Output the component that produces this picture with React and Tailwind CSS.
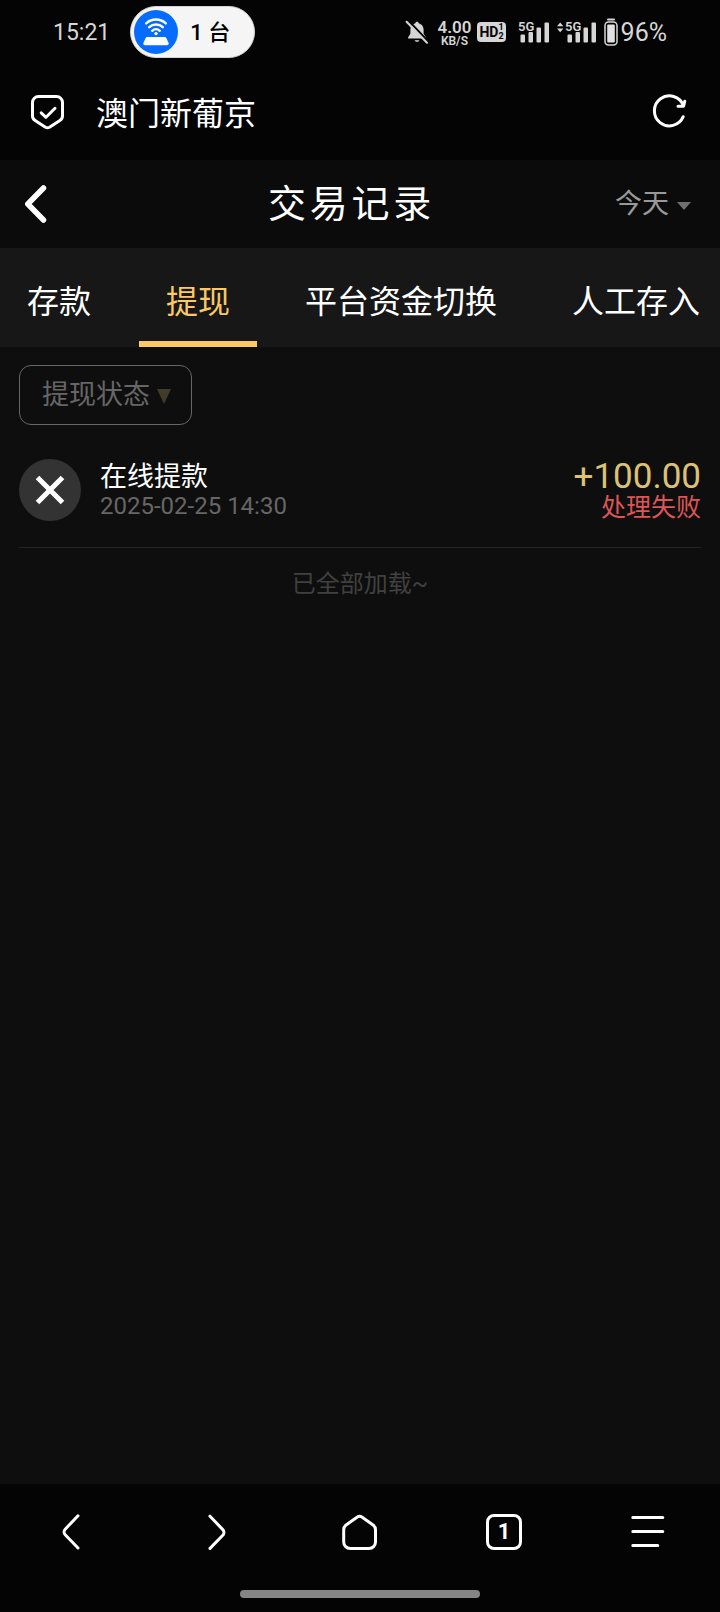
import { useState } from 'react';

const TABS = ['存款', '提现', '平台资金切换', '人工存入'];

const RECORDS = [
  { id: 1, title: '在线提款', time: '2025-02-25 14:30', amount: '+100.00', status: '处理失败' },
];

// ─── Status bar ───────────────────────────────────────────────────────────────
function Signal({ arrows }) {
  return (
    <svg className="h-6 w-10 flex-shrink-0" viewBox="0 0 40 24" fill="#d6d6d6">
      {arrows && <path d="M0 6.2 3.2 2.4 6.4 6.2ZM0 8.4h6.4L3.2 12.2Z" />}
      <text x="8" y="11" fontSize="13" fontWeight="600" fontFamily="Roboto, sans-serif">5G</text>
      <rect x="10.5" y="14.5" width="4.5" height="8" rx="1" />
      <rect x="18.5" y="12" width="4.5" height="10.5" rx="1" />
      <rect x="26.5" y="7.5" width="4.5" height="15" rx="1" />
      <rect x="34.5" y="2.5" width="4.5" height="20" rx="1" />
    </svg>
  );
}

function StatusBar() {
  return (
    <div className="flex h-16 items-center justify-between px-[53px] text-[#d6d6d6]">
      <div className="flex items-center gap-5">
        <span className="pt-0.5 text-[23px] leading-8">15:21</span>
        <div className="flex h-[52px] items-center gap-3 rounded-full border border-[#d4d4d4] bg-[#f5f5f5] pl-[3px] pr-6">
          <svg className="h-11 w-11" viewBox="0 0 44 44" fill="none">
            <circle cx="22" cy="22" r="22" fill="#056cfe" />
            <g stroke="#fff" strokeWidth="2.4" strokeLinecap="round">
              <path d="M12.2 13.4a14.4 14.4 0 0 1 19.600 0" />
              <path d="M15.2 17.200a10 10 0 0 1 13.600 0" />
              <path d="M18.2 20.800a5.600 5.600 0 0 1 7.600 0" />
            </g>
            <circle cx="22" cy="23.6" r="1.7" fill="#fff" />
            <path d="M13.6 27h16.8c1 0 1.6.4 2 1.200l2 4.200c.8 1.800 0 2.800-1.600 2.800H11.200c-1.600 0-2.400-1-1.600-2.800l2-4.200c.4-.8 1-1.200 2-1.200Z" fill="#fff" />
          </svg>
          <span className="pt-0.5 text-[22px] font-medium leading-8 text-black">1 台</span>
        </div>
      </div>

      <div className="flex items-center">
        <svg className="mr-2 h-6 w-6" viewBox="0 0 24 24" fill="none">
          <path d="M12 1.800c.9 0 1.500.6 1.700 1.400 3 .8 4.900 3.200 4.900 6.400v4.200l2.200 3.400c.4.700 0 1.400-.8 1.400H4c-.8 0-1.200-.7-.8-1.400l2.200-3.400V9.600c0-3.200 1.900-5.600 4.900-6.400.2-.8.8-1.400 1.700-1.400Z" fill="#d6d6d6" />
          <path d="M9.600 20.200h4.800c-.4 1-1.300 1.600-2.400 1.600s-2-.6-2.400-1.600Z" fill="#d6d6d6" />
          <path d="m3.600.8 20 21" stroke="#040404" strokeWidth="2" />
          <path d="m1.600 1.800 20.400 21" stroke="#d6d6d6" strokeWidth="2" strokeLinecap="round" />
        </svg>
        <div className="mr-1.5 pt-0.5 text-center font-semibold">
          <p className="text-[17px] leading-4">4.00</p>
          <p className="text-[12px] leading-3">KB/S</p>
        </div>
        <div className="mr-1 flex h-5 items-center rounded bg-[#d6d6d6] px-0.5 text-[#050505]">
          <span className="text-[14px] font-bold leading-5">HD</span>
          <span className="text-[9px] font-bold leading-[9px]">1<br />2</span>
        </div>
        <Signal />
        <div className="w-[7px]" />
        <Signal arrows />
        <svg className="ml-1.5 h-7 w-4" viewBox="0 0 16 28" fill="none">
          <path d="M5 1.500h6" stroke="#d6d6d6" strokeWidth="2" strokeLinecap="round" />
          <rect x="2" y="4" width="12" height="23" rx="3.500" stroke="#d6d6d6" strokeWidth="1.500" />
          <rect x="4.200" y="6.500" width="7.600" height="18" rx="1" fill="#e2e2e2" />
        </svg>
        <span className="ml-0.5 pt-0.5 text-[25px] leading-8">96%</span>
      </div>
    </div>
  );
}

// ─── Browser chrome ───────────────────────────────────────────────────────────
function AddressBar() {
  return (
    <div className="flex h-24 items-center gap-7 px-7 text-white">
      <svg className="h-10 w-10" viewBox="0 0 40 40" fill="none" stroke="currentColor" strokeWidth="3" strokeLinecap="round" strokeLinejoin="round">
        <path d="M10.500 4.500h18a6 6 0 0 1 6 6v13.500a5 5 0 0 1-2.600 4.400l-10.400 6.800a4 4 0 0 1-4 0L7.100 28.400A5 5 0 0 1 4.500 24V10.500a6 6 0 0 1 6-6Z" />
        <path d="m13.200 20.800 4.800 4.500 9-9" />
      </svg>
      <p className="flex-1 pt-1 text-[32px] leading-10">澳门新葡京</p>
      <button type="button" aria-label="刷新">
        <svg className="h-10 w-10" viewBox="0 0 40 40" fill="none" stroke="currentColor" strokeWidth="3" strokeLinecap="round" strokeLinejoin="round">
          <path d="M31.200 24.700A15 15 0 1 1 31.400 13.500" />
          <path d="M32.800 9.200 31.600 14.200 26 14.200" />
        </svg>
      </button>
    </div>
  );
}

function BottomNav() {
  const icon = 'h-9 w-9';
  const stroke = { fill: 'none', stroke: 'currentColor', strokeWidth: 3, strokeLinecap: 'round', strokeLinejoin: 'round' };
  return (
    <footer className="bg-[#040404] text-white">
      <nav className="flex h-24">
        <button type="button" aria-label="后退" className="flex flex-1 items-center justify-center">
          <svg className={icon} viewBox="0 0 36 36" {...stroke}>
            <path d="M24 1.800 11.200 15.200a4 4 0 0 0 0 5.600L24 34" />
          </svg>
        </button>
        <button type="button" aria-label="前进" className="flex flex-1 items-center justify-center">
          <svg className={icon} viewBox="0 0 36 36" {...stroke}>
            <path d="M12 2.200 24.800 15.600a4 4 0 0 1 0 5.600L12 34.400" />
          </svg>
        </button>
        <button type="button" aria-label="主页" className="flex flex-1 items-center justify-center">
          <svg className={icon} viewBox="0 0 36 36" {...stroke}>
            <path d="M15 3.200 4.100 11a6 6 0 0 0-2.400 4.800V28a6.500 6.500 0 0 0 6.500 6.500h18.800a6.500 6.500 0 0 0 6.500-6.500V15.800a6 6 0 0 0-2.400-4.800L20.200 3.200a4.600 4.600 0 0 0-5.200 0Z" />
          </svg>
        </button>
        <button type="button" aria-label="标签页" className="flex flex-1 items-center justify-center">
          <span className="flex h-9 w-9 items-center justify-center rounded-lg border-3 border-white text-[22px] font-bold leading-6">1</span>
        </button>
        <button type="button" aria-label="菜单" className="flex flex-1 items-center justify-center">
          <svg className={icon} viewBox="0 0 36 36" {...stroke}>
            <path d="M2.800 3.500h30M2.800 17.500h30M2.800 31.500h25" />
          </svg>
        </button>
      </nav>
      <div className="flex h-8 justify-center pt-2.5">
        <div className="h-2 w-1/3 rounded-full bg-[#858585]" />
      </div>
    </footer>
  );
}

// ─── Page ─────────────────────────────────────────────────────────────────────
function PageHeader() {
  return (
    <header className="flex h-22 items-center bg-[#0b0b0b]">
      <button type="button" aria-label="返回" className="w-22 pl-4 text-white">
        <svg className="h-10 w-10" viewBox="0 0 40 40" fill="none" stroke="currentColor" strokeWidth="5.500" strokeLinecap="round" strokeLinejoin="round">
          <path d="M27.500 4 11.800 20l15.700 16" />
        </svg>
      </button>
      <h1 className="flex-1 text-center text-[38px] leading-12 tracking-widest text-white">交易记录</h1>
      <div className="relative w-[105px]">
        <select aria-label="日期" className="w-full appearance-none bg-transparent pr-12 text-[27px] leading-9 text-[#999999]">
          <option>今天</option>
        </select>
        <svg className="pointer-events-none absolute right-7 top-4 h-2 w-4" viewBox="0 0 16 8" fill="#6f6f6f">
          <path d="M1 0h14L8 8Z" />
        </svg>
      </div>
    </header>
  );
}

function TabBar({ active, onChange }) {
  return (
    <div role="tablist" className="flex gap-[21px] overflow-hidden bg-[#171717]">
      {TABS.map((tab) => (
        <button
          key={tab}
          type="button"
          role="tab"
          aria-selected={tab === active}
          onClick={() => onChange(tab)}
          className={`flex-shrink-0 whitespace-nowrap border-b-6 px-[27px] pb-[19px] pt-[34px] text-[32px] leading-10 ${
            tab === active ? 'border-[#fbc965] text-[#fbc965]' : 'border-transparent text-white'
          }`}
        >
          {tab}
        </button>
      ))}
    </div>
  );
}

function RecordRow({ record }) {
  return (
    <li className="flex items-center gap-[19px] border-b border-[#242424] pb-[26px]">
      <div className="flex h-[62px] w-[62px] items-center justify-center rounded-full bg-[#333333]">
        <svg className="h-8 w-8" viewBox="0 0 32 32" fill="none" stroke="#fff" strokeWidth="5">
          <path d="m3.500 3.500 25 25M28.500 3.500l-25 25" />
        </svg>
      </div>
      <div className="flex-1">
        <p className="text-[27px] leading-8 text-white">{record.title}</p>
        <p className="text-[24px] leading-[27px] text-[#666666]">{record.time}</p>
      </div>
      <div className="text-right">
        <p className="text-[35px] leading-[34px] text-[#dcc274]">{record.amount}</p>
        <p className="text-[25px] leading-[27px] text-[#dc5656]">{record.status}</p>
      </div>
    </li>
  );
}

export default function App() {
  const [activeTab, setActiveTab] = useState('提现');

  return (
    <div className="flex min-h-screen flex-col bg-[#0e0e0e] font-['Roboto','Noto_Sans_CJK_SC',sans-serif]">
      <div className="bg-[#040404]">
        <StatusBar />
        <AddressBar />
      </div>
      <PageHeader />
      <TabBar active={activeTab} onChange={setActiveTab} />

      <main className="flex-1 px-[19px] pt-[18px]">
        <div className="relative inline-block align-top">
          <select
            aria-label="提现状态"
            className="h-[60px] appearance-none rounded-xl border border-[#666666] bg-transparent pl-[22px] pr-[41px] text-[27px] text-[#666666]"
          >
            <option>提现状态</option>
          </select>
          <svg className="pointer-events-none absolute right-5 top-6 h-4 w-4" viewBox="0 0 16 16" fill="#413b29">
            <path d="M1 0h14L8 15Z" />
          </svg>
        </div>

        <ul className="mt-[34px]">
          {RECORDS.map((record) => <RecordRow key={record.id} record={record} />)}
        </ul>
        <p className="pt-5 text-center text-[24px] leading-8 text-[#404040]">已全部加载~</p>
      </main>

      <BottomNav />
    </div>
  );
}
